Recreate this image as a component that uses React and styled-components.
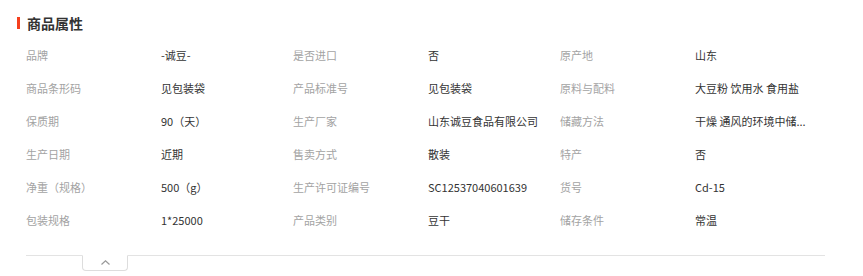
import React from 'react';
import { styled, createGlobalStyle } from 'styled-components';

const GlobalStyle = createGlobalStyle`
  body {
    margin: 0;
    background: #fff;
    font-family: "Noto Sans CJK SC", "Liberation Sans", sans-serif;
  }
`;

const Page = styled.div`
  width: 863px;
  height: 276px;
  padding: 15px 38px 0 17px;
  box-sizing: border-box;
  overflow: hidden;
`;

const Title = styled.h3`
  display: flex;
  align-items: center;
  gap: 7px;
  margin: 0;
  height: 16px;
  font-size: 14px;
  font-weight: 700;
  color: #333;
  line-height: 16px;

  &::before {
    content: '';
    width: 3px;
    height: 12px;
    background: #f5401e;
  }
`;

const AttrGrid = styled.div`
  display: grid;
  grid-template-columns: repeat(3, 135px 132px);
  grid-auto-rows: 33px;
  margin: 7px 0 0 9px;
  font-size: 11px;
`;

const Cell = styled.div`
  display: flex;
  align-items: center;
  min-width: 0;
  color: ${props => (props.$label ? '#a3a3a3' : '#333')};
  white-space: nowrap;
`;

const Footer = styled.div`
  position: relative;
  margin: 19px 0 0 9px;
  border-top: 1px solid #e3e3e3;
`;

const Toggle = styled.button`
  position: absolute;
  top: -1px;
  left: 56px;
  width: 46px;
  height: 16px;
  padding: 0;
  display: flex;
  justify-content: center;
  padding-top: 4px;
  box-sizing: border-box;
  background: #fff;
  border: 1px solid #ddd;
  border-top-color: #fff;
  border-radius: 0 0 4px 4px;
  cursor: pointer;
`;

// 储藏方法 is shown shortened, as on the product page
const attrs = [
  ['品牌', '-诚豆-'], ['是否进口', '否'], ['原产地', '山东'],
  ['商品条形码', '见包装袋'], ['产品标准号', '见包装袋'], ['原料与配料', '大豆粉 饮用水 食用盐'],
  ['保质期', '90（天）'], ['生产厂家', '山东诚豆食品有限公司'], ['储藏方法', '干燥 通风的环境中储...'],
  ['生产日期', '近期'], ['售卖方式', '散装'], ['特产', '否'],
  ['净重（规格）', '500（g）'], ['生产许可证编号', 'SC12537040601639'], ['货号', 'Cd-15'],
  ['包装规格', '1*25000'], ['产品类别', '豆干'], ['储存条件', '常温'],
];

export default function App() {
  return (
    <Page>
      <GlobalStyle />
      <Title>商品属性</Title>
      <AttrGrid>
        {attrs.map(([label, value]) => (
          <React.Fragment key={label}>
            <Cell $label>{label}</Cell>
            <Cell>{value}</Cell>
          </React.Fragment>
        ))}
      </AttrGrid>
      <Footer>
        <Toggle aria-label="收起">
          <svg width="9" height="5" viewBox="0 0 9 5">
            <polyline points="0.5,4.5 4.5,0.8 8.5,4.5" fill="none" stroke="#999" strokeWidth="1.2" />
          </svg>
        </Toggle>
      </Footer>
    </Page>
  );
}
